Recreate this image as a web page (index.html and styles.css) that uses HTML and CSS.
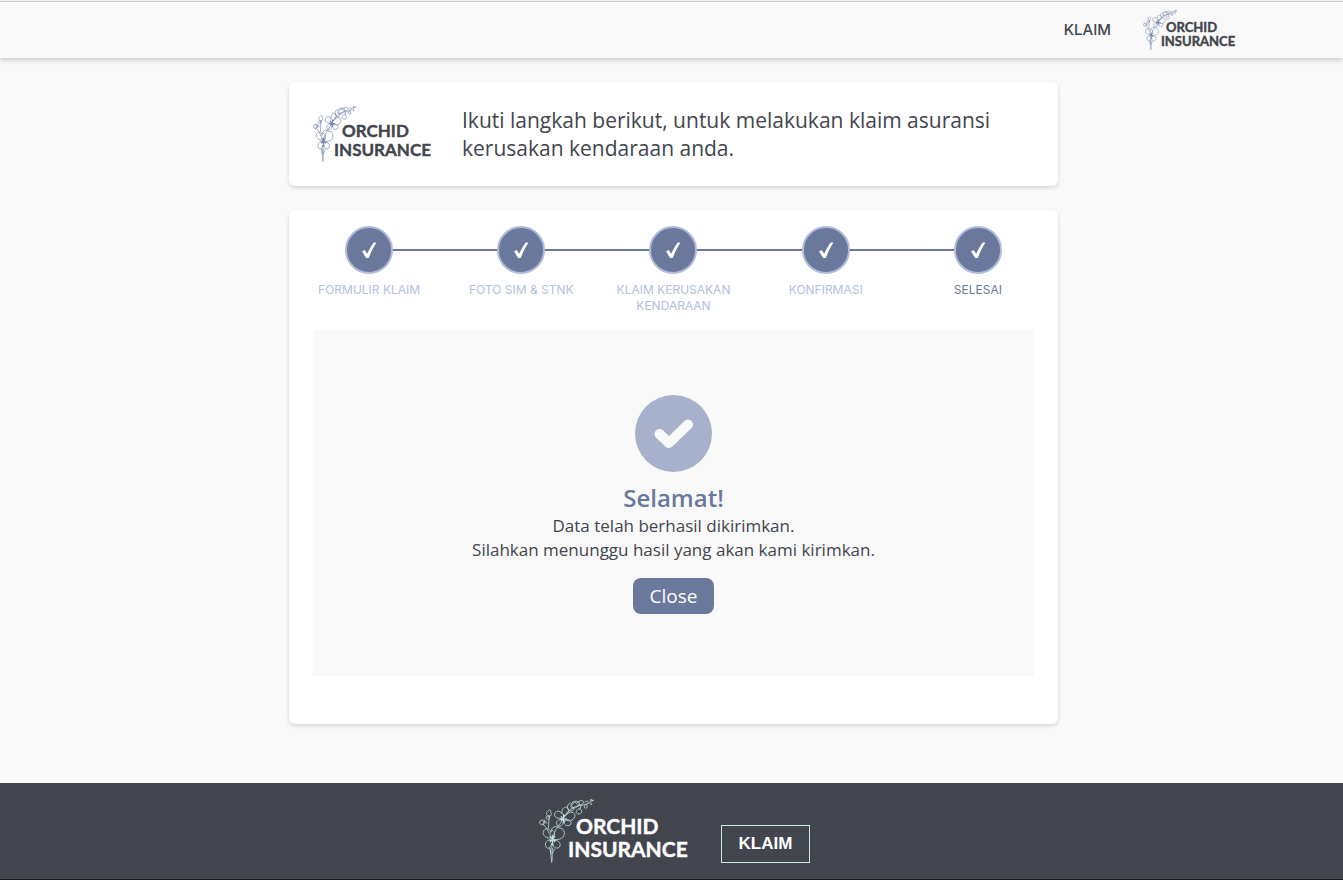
FILE: index.html
```html
<!DOCTYPE html>
<html lang="id">
<head>
<meta charset="utf-8">
<meta name="viewport" content="width=device-width, initial-scale=1">
<title>Orchid Insurance</title>
<link rel="stylesheet" href="styles.css">
</head>
<body>
<svg class="defs" width="0" height="0" aria-hidden="true">
  <symbol id="orchid" viewBox="0 0 55 64" preserveAspectRatio="none">
    <g fill="none" stroke="currentColor" stroke-width="0.8" stroke-linecap="round" stroke-linejoin="round">
      <path d="M12.7 63.5C12.6 58 11 55 11.7 51S14 46 13.7 41C13 34 20 27 24 20C27 14 32 8 39 7C44 6 49 6 54 1"/>
      <path d="M13 62C13.6 57 12.6 54 13.4 49M10.5 49L12 54M15.5 50L13 55"/>
      <path d="M10 34C9 31 7 28 4 25M9.5 29C10 25 9.500 21 10.500 17"/>
      <path d="M13 39C7 40 3 36 4.500 32C7 28 11 30 12 33C12 28 17 26 20 29C25 29 27 34 24 38C21 41 17 41 14 40"/>
      <path d="M13 41C8 40 5 44 7 48C9 51 12 48 13 44C14 49 19 51 21 47C22 43 18 41 14.500 41M12 33C10 35 11 38 13.500 39C16 38 17 32 13 31"/>
      <path d="M24 19C18 21 14 17 16 14C18 11 22 12 23 15C22 9 26 7 29 9C31 12 28 16 25 18C29 12 35 12 36 16C36 21 31 23 26 21"/>
      <path d="M24 21C20 19 16 23 18 26C21 29 24 26 24.500 22C25 27 30 28 32 25C33 22 29 20 26 20"/>
      <path d="M1 22C-0.500 24 2 27 4 25.500C7 25 6 21 4 21ZM4 25L5.500 21"/>
      <path d="M9 12C7 13 7 16 9 17C12 18 13 15 12 14C11 13 13 12 11 11ZM10 17C7 17 6 19 8 20C10 21 11 19 10 17M7 22C5 22 6 24 8 24"/>
      <path d="M31 4C27 6 28 11 31 12C36 12 36 7 32 8C31 3 36 1 40 3C42 6 37 10 33 9M33 6C34 3 37 2 38 5"/>
      <path d="M38 4C40 1 44 1 45 3C44 6 41 6 39 6M39 10C36 12 37 15 40 15C43 15 44 11 41 10ZM41 10L42 7"/>
      <path d="M46 6C44 8 46 10 47.500 9C49 8 48 6 47 5M46 3C47 1 50 2 49 4M51 5C52 7 54 5 52 4M51 2L52 0L53 2L55 1"/>
    </g>
    <g fill="none" stroke="currentColor" stroke-width="1.200">
      <path d="M11 37L16 43M16 37L11 43M13.500 36V45M10 41H17M12 45L15 46"/>
      <path d="M22 17L26 23M26 16L22 22M24.500 15V24M21 20H28"/>
    </g>
  </symbol>
  <symbol id="tick" viewBox="0 0 14 17">
    <path d="M0 9.500L2.800 8L5.200 11.800C7 7.500 9.500 3.500 11.700 0.500H14.500C11.500 5 9 10 6.800 16H4.200Z" fill="currentColor"/>
  </symbol>
</svg>

<header class="topbar">
  <nav class="topnav">
    <a class="nav-link" href="#klaim">KLAIM</a>
    <a href="#home" aria-label="Orchid Insurance">
      <svg class="logo logo-small" viewBox="0 0 94 40">
        <use class="flower" href="#orchid" width="34" height="40"/>
        <text x="23" y="22" font-size="13">ORCHID</text>
        <text x="18" y="36" font-size="13">INSURANCE</text>
      </svg>
    </a>
  </nav>
</header>

<main class="content">
  <section class="card intro">
    <svg class="logo logo-medium" viewBox="0 0 117 56" role="img" aria-label="Orchid Insurance">
      <use class="flower" href="#orchid" width="43" height="56"/>
      <text x="29" y="31" font-size="17">ORCHID</text>
      <text x="21" y="50" font-size="17">INSURANCE</text>
    </svg>
    <p class="intro-text">Ikuti langkah berikut, untuk melakukan klaim asuransi kerusakan kendaraan anda.</p>
  </section>

  <section class="card claim">
    <ol class="steps">
      <li class="step"><span class="dot"><svg class="tick"><use href="#tick"/></svg></span><span class="label">FORMULIR KLAIM</span></li>
      <li class="step"><span class="dot"><svg class="tick"><use href="#tick"/></svg></span><span class="label">FOTO SIM &amp; STNK</span></li>
      <li class="step"><span class="dot"><svg class="tick"><use href="#tick"/></svg></span><span class="label">KLAIM KERUSAKAN KENDARAAN</span></li>
      <li class="step"><span class="dot"><svg class="tick"><use href="#tick"/></svg></span><span class="label">KONFIRMASI</span></li>
      <li class="step current"><span class="dot"><svg class="tick"><use href="#tick"/></svg></span><span class="label">SELESAI</span></li>
    </ol>
    <div class="panel">
      <svg class="success" viewBox="0 0 77 77" aria-hidden="true">
        <circle cx="38.500" cy="38.500" r="38.500" fill="#a7b1cb"/>
        <path d="M24.500 39L34 48L53 29.500" fill="none" stroke="#f9f9f9" stroke-width="10" stroke-linecap="round" stroke-linejoin="round"/>
      </svg>
      <h1 class="title">Selamat!</h1>
      <p class="message">Data telah berhasil dikirimkan.<br>Silahkan menunggu hasil yang akan kami kirimkan.</p>
      <button class="close" type="button">Close</button>
    </div>
  </section>
</main>

<footer class="footer">
  <svg class="logo logo-large" viewBox="0 0 151 64" role="img" aria-label="Orchid Insurance">
    <use class="flower" href="#orchid" width="55" height="64"/>
    <text x="37" y="35" font-size="21">ORCHID</text>
    <text x="29" y="58" font-size="21">INSURANCE</text>
  </svg>
  <a class="footer-link" href="#klaim">KLAIM</a>
</footer>
</body>
</html>
```
FILE: styles.css
```css
* { box-sizing: border-box; }
body {
  margin: 0;
  min-height: 100vh;
  display: flex;
  flex-direction: column;
  background: #f9f9f9;
  color: #42454d;
  font-family: "Open Sans", sans-serif;
}
p, h1, ol { margin: 0; padding: 0; }
a { color: inherit; text-decoration: none; }
.defs { position: absolute; }
.topbar {
  margin-top: 1px;
  height: 57px;
  padding: 0 106px;
  border-top: 1px solid #c9cbca;
  box-shadow: 0 2px 5px rgba(0, 0, 0, 0.2);
}
.topnav {
  height: 100%;
  display: flex;
  justify-content: flex-end;
  align-items: center;
  gap: 32px;
}
.nav-link { font: 500 15px/24px Inter, sans-serif; }
.logo {
  display: block;
  overflow: visible;
  font-family: Lato, sans-serif;
  font-weight: 700;
  fill: currentColor;
}
.logo text {
  stroke: currentColor;
  stroke-width: 0.4px;
}
.logo .flower { color: #7484ad; }
.logo-small { width: 94px; height: 40px; }
.logo-medium { width: 117px; height: 56px; flex: none; }
.logo-large { width: 151px; height: 64px; }
.content {
  width: 100%;
  max-width: 773px;
  margin: 24px auto 0;
  padding-left: 4px;
  display: flex;
  flex-direction: column;
  gap: 24px;
}
.card {
  background: #fff;
  border-radius: 6px;
  box-shadow: 0 2px 4px rgba(0, 0, 0, 0.14);
}
.intro {
  display: flex;
  align-items: center;
  gap: 32px;
  padding: 24px;
}
.intro-text { font-size: 21px; line-height: 28px; }
.claim { padding: 16px 24px 48px; }
.steps {
  margin: 0 -20px;
  display: grid;
  grid-template-columns: repeat(5, 1fr);
  list-style: none;
}
.step {
  position: relative;
  display: flex;
  flex-direction: column;
  align-items: center;
  gap: 8px;
}
.step + .step::before {
  content: "";
  position: absolute;
  top: 23px;
  left: -50%;
  width: 100%;
  height: 2px;
  background: #6a789b;
}
.dot {
  position: relative;
  z-index: 1;
  width: 48px;
  height: 48px;
  display: grid;
  place-items: center;
  border: 2px solid #b0bbdd;
  border-radius: 50%;
  background: #6a789b;
  color: #fff;
}
.tick { width: 14px; height: 17px; overflow: visible; }
.label {
  padding: 0 16px;
  text-align: center;
  font: 400 12px/16px Inter, sans-serif;
  color: #b5c0df;
}
.current .label { color: #6a789b; }
.panel {
  margin-top: 16px;
  padding: 65px 24px 62px;
  display: flex;
  flex-direction: column;
  align-items: center;
  background: #f9f9f9;
  text-align: center;
}
.success { width: 77px; height: 77px; }
.title {
  margin-top: 10px;
  font-size: 24px;
  font-weight: 600;
  line-height: 32px;
  color: #6a789b;
}
.message { font-size: 17px; line-height: 24px; }
.close {
  margin-top: 16px;
  height: 36px;
  padding: 0 17px;
  border: 0;
  border-radius: 8px;
  background: #6a789b;
  color: #fff;
  font: 400 19px/28px "Open Sans", sans-serif;
}
.footer {
  margin-top: auto;
  padding: 16px 0 16px 6px;
  display: flex;
  justify-content: center;
  align-items: flex-end;
  gap: 31px;
  background: #42454d;
  border-bottom: 1px solid #1b191d;
  color: #fff;
}
.footer .flower { color: #c4e0dc; }
.footer-link {
  padding: 6px 17px;
  border: 1px solid #c9ede3;
  font: 700 17px/24px "Liberation Sans", sans-serif;
}
```
